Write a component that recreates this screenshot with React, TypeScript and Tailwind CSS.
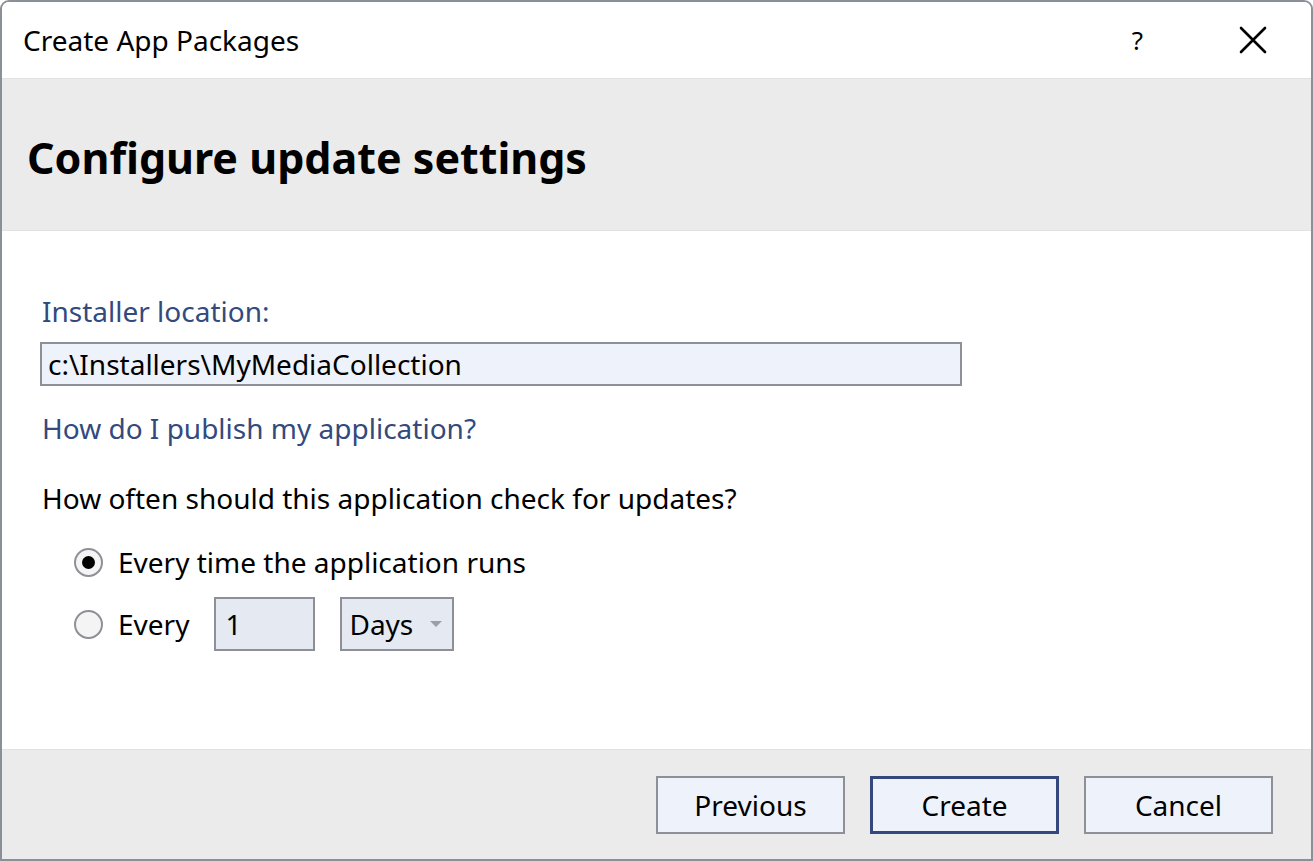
import React from "react";

const font = { fontFamily: '"Noto Sans", "Open Sans", sans-serif' };

function Radio({ checked }: { checked?: boolean }) {
  return (
    <div className="w-[29px] h-[29px] rounded-full border-2 border-[#8d9097] bg-[#f4f4f4] flex items-center justify-center shrink-0">
      {checked && <div className="w-[13px] h-[13px] rounded-full bg-black" />}
    </div>
  );
}

function Btn({ label, primary }: { label: string; primary?: boolean }) {
  return (
    <div
      className={`w-[189px] h-[58px] flex items-center justify-center bg-[#eef2fa] text-[28px] text-black ${
        primary ? "border-[3px] border-[#34487d]" : "border-2 border-[#8d9097]"
      }`}
    >
      {label}
    </div>
  );
}

export default function App() {
  return (
    <div style={font} className="w-[1313px] h-[861px] bg-white">
      <div className="w-full h-full border-2 border-[#8b8f97] rounded-t-[9px] flex flex-col overflow-hidden">
        <div className="h-[76px] flex items-center justify-between pl-[21px] pr-[44px] bg-white shrink-0">
          <div className="text-[28px] text-black leading-none">Create App Packages</div>
          <div className="flex items-center gap-[96px]">
            <span className="text-[26px] text-black leading-none">?</span>
            <svg width="28" height="28" viewBox="0 0 28 28">
              <path d="M2 2 L26 26 M26 2 L2 26" stroke="#000" strokeWidth="2.6" strokeLinecap="round" />
            </svg>
          </div>
        </div>
        <div className="h-[152px] bg-[#ebebeb] flex items-center pl-[25px] pt-[6px] shrink-0 border-t border-[#e2e2e2]">
          <div className="text-[43px] font-bold text-black leading-none">Configure update settings</div>
        </div>
        <div className="flex-1 bg-white pl-[40px] flex flex-col border-t border-[#e2e2e2]">
          <div className="mt-[63px] h-[34px] leading-[34px] text-[28px] text-[#334a7e]">Installer location:</div>
          <div className="-ml-[2px] mt-[14px] w-[922px] h-[44px] bg-[#eef2fa] border-2 border-[#8d9097] flex items-center pl-[6px] text-[28px] text-black">
            c:\Installers\MyMediaCollection
          </div>
          <div className="mt-[25px] h-[34px] leading-[34px] text-[28px] text-[#334a7e]">How do I publish my application?</div>
          <div className="mt-[36px] h-[34px] leading-[34px] text-[28px] text-black">How often should this application check for updates?</div>
          <div className="mt-[30px] h-[34px] flex items-center pl-[32px] gap-[15px]">
            <Radio checked />
            <span className="text-[28px] text-black leading-[34px]">Every time the application runs</span>
          </div>
          <div className="mt-[18px] h-[54px] flex items-center pl-[32px]">
            <Radio />
            <span className="ml-[15px] text-[28px] text-black leading-[34px]">Every</span>
            <div className="ml-[25px] w-[101px] h-[54px] bg-[#e4e9f2] border-2 border-[#8d9097] flex items-center pl-[9px] text-[28px] text-black">
              1
            </div>
            <div className="ml-[25px] w-[114px] h-[54px] bg-[#e4e9f2] border-2 border-[#8d9097] flex items-center justify-between pl-[7px] pr-[10px] text-[28px] text-black">
              <span>Days</span>
              <svg width="12" height="7" viewBox="0 0 12 7">
                <path d="M0 0 L12 0 L6 6 Z" fill="#9aa0a8" />
              </svg>
            </div>
          </div>
        </div>
        <div className="h-[110px] bg-[#ebebeb] flex items-center justify-end pr-[38px] gap-[25px] shrink-0 border-t border-[#e2e2e2]">
          <Btn label="Previous" />
          <Btn label="Create" primary />
          <Btn label="Cancel" />
        </div>
      </div>
    </div>
  );
}
